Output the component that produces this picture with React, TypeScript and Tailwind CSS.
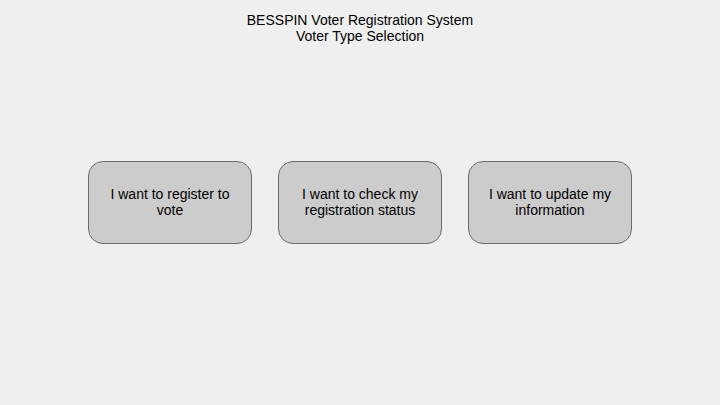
export default function App() {
  const options = [
    "I want to register to vote",
    "I want to check my registration status",
    "I want to update my information",
  ];
  return (
    <div
      className="w-[720px] h-[405px] bg-[#efefef] flex flex-col items-center text-black"
      style={{ fontFamily: '"Liberation Sans", Arial, sans-serif' }}
    >
      <div className="pt-[12px] text-[14px] leading-[16px] text-center">
        <div>BESSPIN Voter Registration System</div>
        <div>Voter Type Selection</div>
      </div>
      <div className="mt-[117px] flex gap-[26px]">
        {options.map((o) => (
          <div
            key={o}
            className="w-[164px] h-[83px] rounded-[15px] border border-[#6b6b6b] bg-[#cccccc] flex items-center justify-center px-[16px] pb-[2px] text-center text-[14px] leading-[16px]"
          >
            {o}
          </div>
        ))}
      </div>
    </div>
  );
}
